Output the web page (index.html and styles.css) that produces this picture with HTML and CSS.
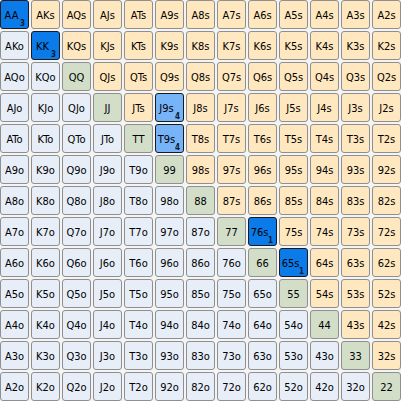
FILE: index.html
```html
<!DOCTYPE html>
<html>
<head>
<meta charset="utf-8">
<link rel="stylesheet" href="styles.css">
</head>
<body>
<div class="grid">
<div class="c sel">AA<span class="n">3</span></div><div class="c s">AKs</div><div class="c s">AQs</div><div class="c s">AJs</div><div class="c s">ATs</div><div class="c s">A9s</div><div class="c s">A8s</div><div class="c s">A7s</div><div class="c s">A6s</div><div class="c s">A5s</div><div class="c s">A4s</div><div class="c s">A3s</div><div class="c s">A2s</div>
<div class="c o">AKo</div><div class="c sel">KK<span class="n">3</span></div><div class="c s">KQs</div><div class="c s">KJs</div><div class="c s">KTs</div><div class="c s">K9s</div><div class="c s">K8s</div><div class="c s">K7s</div><div class="c s">K6s</div><div class="c s">K5s</div><div class="c s">K4s</div><div class="c s">K3s</div><div class="c s">K2s</div>
<div class="c o">AQo</div><div class="c o">KQo</div><div class="c p">QQ</div><div class="c s">QJs</div><div class="c s">QTs</div><div class="c s">Q9s</div><div class="c s">Q8s</div><div class="c s">Q7s</div><div class="c s">Q6s</div><div class="c s">Q5s</div><div class="c s">Q4s</div><div class="c s">Q3s</div><div class="c s">Q2s</div>
<div class="c o">AJo</div><div class="c o">KJo</div><div class="c o">QJo</div><div class="c p">JJ</div><div class="c s">JTs</div><div class="c lt">J9s<span class="n">4</span></div><div class="c s">J8s</div><div class="c s">J7s</div><div class="c s">J6s</div><div class="c s">J5s</div><div class="c s">J4s</div><div class="c s">J3s</div><div class="c s">J2s</div>
<div class="c o">ATo</div><div class="c o">KTo</div><div class="c o">QTo</div><div class="c o">JTo</div><div class="c p">TT</div><div class="c lt">T9s<span class="n">4</span></div><div class="c s">T8s</div><div class="c s">T7s</div><div class="c s">T6s</div><div class="c s">T5s</div><div class="c s">T4s</div><div class="c s">T3s</div><div class="c s">T2s</div>
<div class="c o">A9o</div><div class="c o">K9o</div><div class="c o">Q9o</div><div class="c o">J9o</div><div class="c o">T9o</div><div class="c p">99</div><div class="c s">98s</div><div class="c s">97s</div><div class="c s">96s</div><div class="c s">95s</div><div class="c s">94s</div><div class="c s">93s</div><div class="c s">92s</div>
<div class="c o">A8o</div><div class="c o">K8o</div><div class="c o">Q8o</div><div class="c o">J8o</div><div class="c o">T8o</div><div class="c o">98o</div><div class="c p">88</div><div class="c s">87s</div><div class="c s">86s</div><div class="c s">85s</div><div class="c s">84s</div><div class="c s">83s</div><div class="c s">82s</div>
<div class="c o">A7o</div><div class="c o">K7o</div><div class="c o">Q7o</div><div class="c o">J7o</div><div class="c o">T7o</div><div class="c o">97o</div><div class="c o">87o</div><div class="c p">77</div><div class="c sel">76s<span class="n">1</span></div><div class="c s">75s</div><div class="c s">74s</div><div class="c s">73s</div><div class="c s">72s</div>
<div class="c o">A6o</div><div class="c o">K6o</div><div class="c o">Q6o</div><div class="c o">J6o</div><div class="c o">T6o</div><div class="c o">96o</div><div class="c o">86o</div><div class="c o">76o</div><div class="c p">66</div><div class="c sel">65s<span class="n">1</span></div><div class="c s">64s</div><div class="c s">63s</div><div class="c s">62s</div>
<div class="c o">A5o</div><div class="c o">K5o</div><div class="c o">Q5o</div><div class="c o">J5o</div><div class="c o">T5o</div><div class="c o">95o</div><div class="c o">85o</div><div class="c o">75o</div><div class="c o">65o</div><div class="c p">55</div><div class="c s">54s</div><div class="c s">53s</div><div class="c s">52s</div>
<div class="c o">A4o</div><div class="c o">K4o</div><div class="c o">Q4o</div><div class="c o">J4o</div><div class="c o">T4o</div><div class="c o">94o</div><div class="c o">84o</div><div class="c o">74o</div><div class="c o">64o</div><div class="c o">54o</div><div class="c p">44</div><div class="c s">43s</div><div class="c s">42s</div>
<div class="c o">A3o</div><div class="c o">K3o</div><div class="c o">Q3o</div><div class="c o">J3o</div><div class="c o">T3o</div><div class="c o">93o</div><div class="c o">83o</div><div class="c o">73o</div><div class="c o">63o</div><div class="c o">53o</div><div class="c o">43o</div><div class="c p">33</div><div class="c s">32s</div>
<div class="c o">A2o</div><div class="c o">K2o</div><div class="c o">Q2o</div><div class="c o">J2o</div><div class="c o">T2o</div><div class="c o">92o</div><div class="c o">82o</div><div class="c o">72o</div><div class="c o">62o</div><div class="c o">52o</div><div class="c o">42o</div><div class="c o">32o</div><div class="c p">22</div>
</div>
</body>
</html>
```
FILE: styles.css
```css
html, body {
  margin: 0;
  padding: 0;
  background: #f4f4f4;
}
.grid {
  display: grid;
  grid-template-columns: repeat(13, 29px);
  grid-auto-rows: 29px;
  gap: 2px;
  width: 401px;
}
.c {
  position: relative;
  box-sizing: border-box;
  border: 1px solid #8f8f8f;
  border-radius: 3px;
  display: flex;
  align-items: center;
  justify-content: center;
  font-family: "DejaVu Sans Condensed", "DejaVu Sans", sans-serif;
  font-stretch: condensed;
  font-size: 11px;
  line-height: 1;
  padding-top: 1px;
  color: #000;
}
.s { background: #ffe8bf; }
.o { background: #e7eef8; }
.p { background: #d3dec8; }
.sel { background: #0a7be8; border-color: #1a1a1a; padding-right: 6px; }
.lt { background: #77b3f7; border-color: #1a1a1a; padding-right: 6px; }
.n {
  position: absolute;
  right: 3px;
  bottom: 0;
  font-family: "DejaVu Sans Condensed", "DejaVu Sans", sans-serif;
  font-size: 8px;
  font-weight: bold;
  color: #0a1a30;
  line-height: 1;
}
```
